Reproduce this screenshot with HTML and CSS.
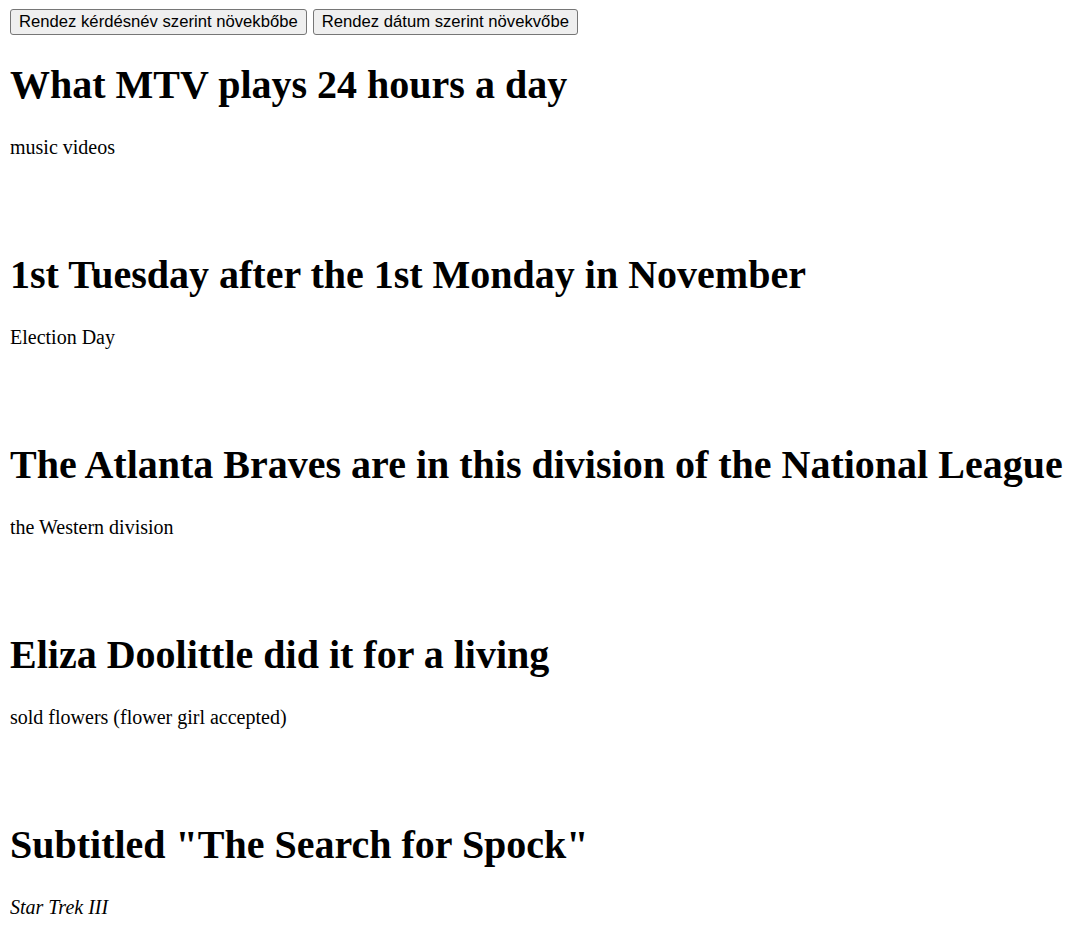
FILE: index.html
```html
<!DOCTYPE html>
<html>
<head>
<meta charset="utf-8">
<link rel="stylesheet" href="styles.css">
</head>
<body>
<div class="toolbar"><button class="btn">Rendez kérdésnév szerint növekbőbe</button><button class="btn">Rendez dátum szerint növekvőbe</button></div>
<div class="list">
<div class="item"><h1 class="q">What MTV plays 24 hours a day</h1><p class="a">music videos</p></div>
<div class="item"><h1 class="q">1st Tuesday after the 1st Monday in November</h1><p class="a">Election Day</p></div>
<div class="item"><h1 class="q">The Atlanta Braves are in this division of the National League</h1><p class="a">the Western division</p></div>
<div class="item"><h1 class="q">Eliza Doolittle did it for a living</h1><p class="a">sold flowers (flower girl accepted)</p></div>
<div class="item"><h1 class="q">Subtitled "The Search for Spock"</h1><p class="a"><i>Star Trek III</i></p></div>
</div>
</body>
</html>
```

FILE: styles.css
```css
body {
  font-family: "Liberation Serif", "Times New Roman", serif;
  font-size: 20px;
  color: #000;
  background: #fff;
  margin: 9px 10px 10px;
}
.toolbar {
  display: flex;
  gap: 6px;
  height: 26px;
}
.btn {
  font-family: "Liberation Sans", Arial, sans-serif;
  font-size: 16.67px;
  height: 26px;
  box-sizing: border-box;
  padding: 0 8px;
  background: #efefef;
  color: #000;
  border: 1px solid #767676;
  border-radius: 3px;
}
.list {
  display: flex;
  flex-direction: column;
  gap: 93px;
  padding-top: 27px;
}
.item {
  display: flex;
  flex-direction: column;
  gap: 28px;
}
.q {
  font-size: 40px;
  font-weight: bold;
  line-height: 46px;
  margin: 0;
  white-space: nowrap;
}
.a {
  margin: 0;
  line-height: 23px;
}
```
